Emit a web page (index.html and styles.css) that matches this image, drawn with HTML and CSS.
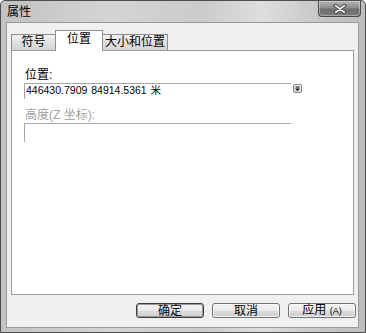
FILE: index.html
```html
<!DOCTYPE html>
<html lang="zh"><head>
<meta charset="utf-8">
<title>属性</title>
<link rel="stylesheet" href="styles.css">
</head><body>
<div class="window">
<div class="titlebar">
<span class="title">属性</span>
<span class="close"><svg width="14" height="10" viewBox="0 0 14 10">
<path d="M2.5,1.5 L11.5,8.5 M11.5,1.5 L2.5,8.5" stroke="#3a3a3a" stroke-width="3.4" stroke-linecap="round"/>
<path d="M2.5,1.5 L11.5,8.5 M11.5,1.5 L2.5,8.5" stroke="#f4f4f4" stroke-width="1.6" stroke-linecap="round"/>
</svg></span>
</div>
<div class="client">
<div class="tabs">
<div class="tab first">符号</div>
<div class="tab active">位置</div>
<div class="tab last">大小和位置</div>
</div>
<div class="panel">
<div class="label">位置:</div>
<div class="row">
<div class="field value">446430.7909 84914.5361 米</div>
<span class="drop"><svg width="9" height="9" viewBox="0 0 9 9">
<path d="M2.5,3 H6.5" stroke="#000" stroke-width="1"/>
<path d="M2,4.5 H7 L4.5,7 Z" fill="#000"/>
</svg></span>
</div>
<div class="label disabled">高度(Z 坐标):</div>
<div class="field tall"></div>
</div>
<div class="buttons">
<button class="btn default">确定</button>
<button class="btn">取消</button>
<button class="btn">应用 <span class="key">(A)</span></button>
</div>
</div>
</div>
</body></html>
```
FILE: styles.css
```css
html, body {
	margin: 0;
	padding: 0;
	background: #fff;
}

body {
	font-family: "Liberation Sans", "Noto Sans CJK SC", sans-serif;
	font-size: 12px;
	color: #000;
}

.window {
	width: 366px;
	height: 333px;
	box-sizing: border-box;
	border: 1px solid #4e4e4e;
	border-radius: 5px 5px 0 0;
	padding: 0 6px 4px 5px;
	display: flex;
	flex-direction: column;
	background: linear-gradient(to right, #c2c2c2 0%, #d4d4d4 30%, #cbcbcb 55%, #dedede 72%, #c6c6c6 88%, #bdbdbd 100%);
}

.titlebar {
	height: 21px;
	display: flex;
	align-items: flex-start;
	margin: 0 -6px 0 -5px;
	padding: 0 4px 0 6px;
}

.title {
	line-height: 14px;
	margin-top: 4px;
	font-size: 12px;
}

.close {
	margin-left: auto;
	width: 43px;
	height: 16px;
	box-sizing: border-box;
	border: 1px solid #4a4a4a;
	border-top: none;
	border-radius: 0 0 4px 4px;
	background: linear-gradient(#b4b4b4 0%, #8e8e8e 45%, #6e6e6e 55%, #7c7c7c 100%);
	box-shadow: inset 0 0 0 1px rgba(255, 255, 255, 0.35);
	display: flex;
	align-items: center;
	justify-content: center;
}

.client {
	flex: 1;
	border: 1px solid #9a9a9a;
	background: #f0f0f0;
	padding: 7px 2px 0 4px;
	display: flex;
	flex-direction: column;
}

.tabs {
	height: 20px;
	display: flex;
	align-items: flex-end;
}

.tab {
	height: 16px;
	box-sizing: border-box;
	border: 1px solid #8e8e8e;
	border-bottom: none;
	border-left: none;
	background: linear-gradient(#f2f2f2, #e0e0e0 50%, #d6d6d6);
	line-height: 15px;
	text-align: center;
	font-size: 12px;
}

.tab.first {
	border-left: 1px solid #8e8e8e;
	width: 45px;
}

.tab.last {
	width: 65px;
}

.tab.active {
	height: 21px;
	margin-bottom: -1px;
	margin-left: -1px;
	width: 48px;
	border-left: 1px solid #8e8e8e;
	background: #fff;
	line-height: 16px;
	position: relative;
	z-index: 1;
}

.panel {
	height: 245px;
	box-sizing: border-box;
	margin-right: 2px;
	border: 1px solid #9c9c9c;
	background: #fff;
	padding: 17px 0 0 12px;
}

.label {
	line-height: 14px;
	padding-left: 1px;
	font-size: 12px;
}

.label.disabled {
	color: #a2a2a2;
	margin-top: 9px;
}

.row {
	display: flex;
	align-items: flex-start;
	gap: 2px;
	margin-top: 1px;
}

.field {
	width: 267px;
	height: 16px;
	box-sizing: border-box;
	border-top: 1px solid #a6a6a6;
	border-left: 1px solid #a6a6a6;
}

.field.value {
	font-size: 10.5px;
	line-height: 13px;
	padding-left: 1px;
	word-spacing: 1px;
}

.field.tall {
	height: 19px;
	margin-top: 1px;
}

.drop {
	width: 9px;
	height: 9px;
	margin-top: 1px;
	box-sizing: border-box;
	border: 1px solid #858585;
	border-radius: 2px;
	background: linear-gradient(#fcfcfc, #d6d6d6);
	display: flex;
}

.drop svg {
	margin: -1px;
}

.buttons {
	display: flex;
	justify-content: flex-end;
	gap: 8px;
	margin-top: 8px;
}

.btn {
	width: 68px;
	height: 15px;
	box-sizing: border-box;
	border: 1px solid #727272;
	border-radius: 3px;
	background: linear-gradient(#f4f4f4, #ebebeb 50%, #dcdcdc 51%, #cfcfcf);
	box-shadow: inset 0 0 0 1px rgba(255, 255, 255, 0.7);
	font-family: "Liberation Sans", "Noto Sans CJK SC", sans-serif;
	font-size: 12px;
	line-height: 12px;
	padding: 0;
	color: #000;
}

.btn.default {
	border-color: #3e3e3e;
	box-shadow: inset 0 0 0 1px #9a9a9a;
}

.key {
	font-size: 9px;
}
```
